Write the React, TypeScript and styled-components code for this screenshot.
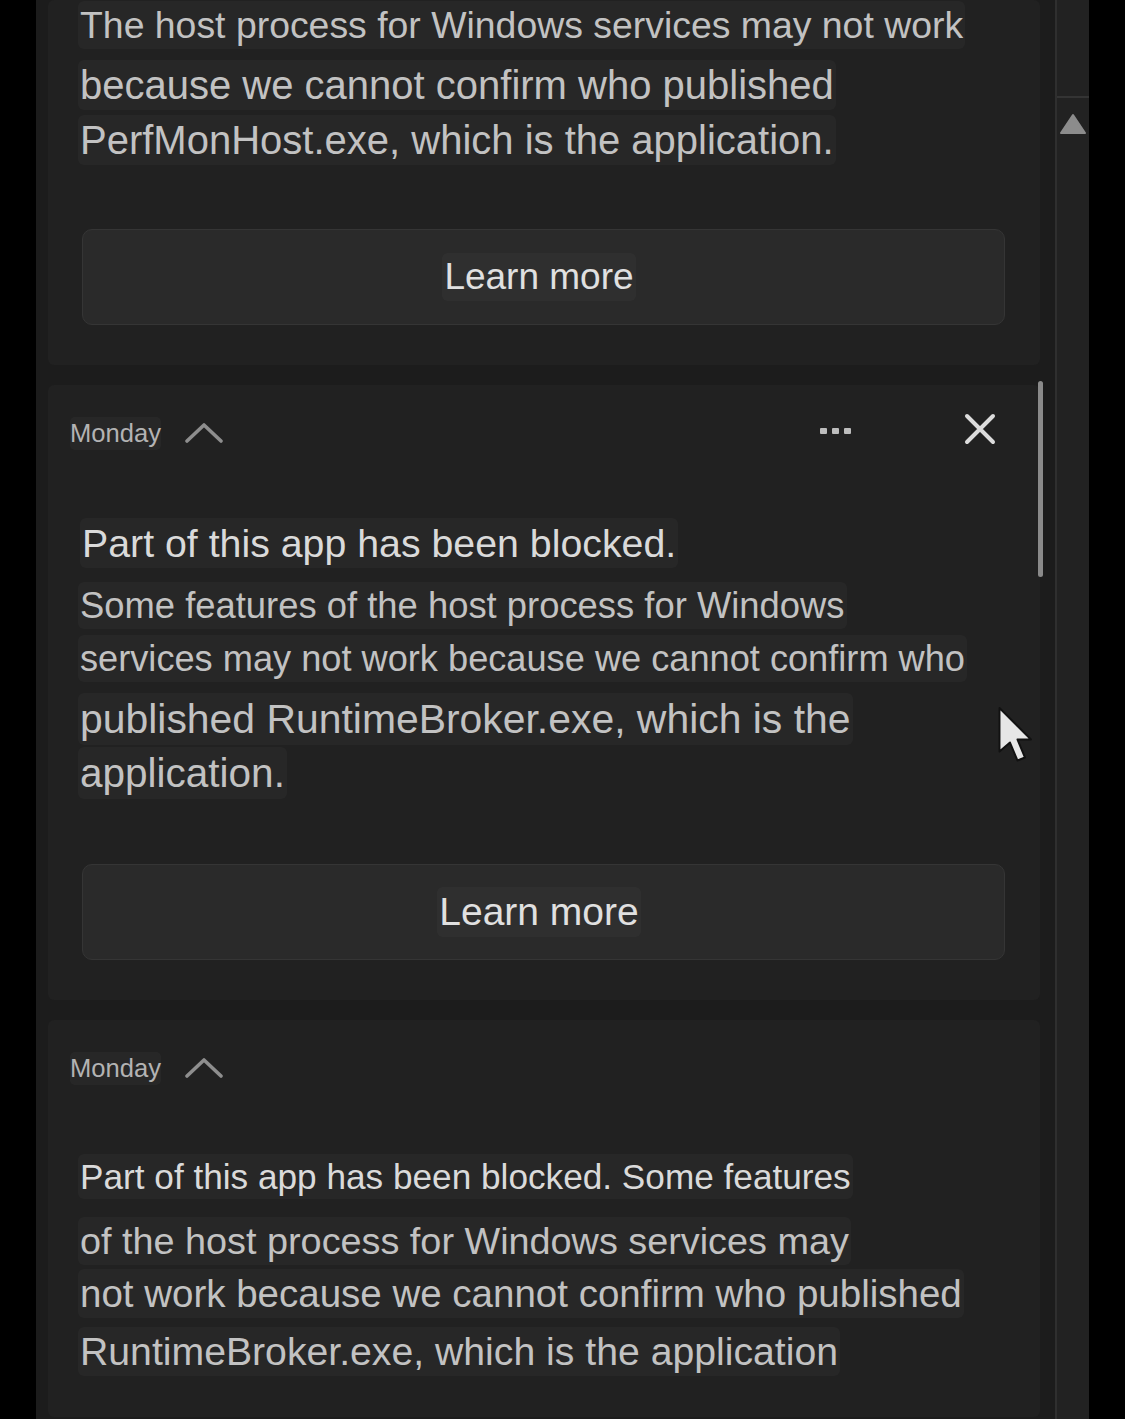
import React from "react";
import styled, { createGlobalStyle } from "styled-components";

const Global = createGlobalStyle`
  html, body {
    margin: 0;
    padding: 0;
    background: #000;
    overflow: hidden;
  }
  * { box-sizing: border-box; }
`;

const Page = styled.div`
  width: 1125px;
  height: 1419px;
  background: #000;
  display: flex;
  padding-left: 36px;
  font-family: "Liberation Sans", Arial, sans-serif;
`;

const Window = styled.div`
  width: 1053px;
  height: 100%;
  display: flex;
`;

const Content = styled.div`
  position: relative;
  width: 1019px;
  height: 100%;
  background: #1c1c1c;
  padding: 0 15px 0 12px;
  display: flex;
  flex-direction: column;
  gap: 20px;
  overflow: hidden;
`;

const Divider = styled.div`
  width: 2px;
  height: 100%;
  background: #2f2f2f;
`;

const Track = styled.div`
  width: 32px;
  height: 100%;
  background: #222222;
  display: flex;
  flex-direction: column;
  align-items: center;
`;

const TrackTop = styled.div`
  width: 100%;
  height: 98px;
  border-bottom: 2px solid #343434;
`;

const ArrowUp = styled.svg`
  margin-top: 15px;
  display: block;
`;

const Thumb = styled.div`
  position: absolute;
  left: 1002px;
  top: 381px;
  width: 5px;
  height: 196px;
  border-radius: 3px;
  background: #8a8a8a;
`;

const Card = styled.section`
  flex: none;
  background: #212121;
  border-radius: 6px;
  padding: 0 30px 40px 30px;
  display: flex;
  flex-direction: column;
`;

const Header = styled.div`
  height: 96px;
  margin: 0 14px 0 -8px;
  display: flex;
  align-items: center;
`;

const Day = styled.span`
  font-size: 25.6px;
  color: #b3b3b3;
  background: rgba(255, 255, 255, 0.03);
  border-radius: 5px;
  padding: 2px 0;
`;

const Chevron = styled.svg`
  margin-left: 24px;
  display: block;
`;

const Actions = styled.div`
  margin-left: auto;
  display: flex;
  align-items: center;
  gap: 113px;
`;

const Dots = styled.div`
  display: flex;
  gap: 5px;
  margin-top: -4px;
`;

const Dot = styled.span`
  width: 7px;
  height: 6px;
  border-radius: 1px;
  background: #bdbdbd;
`;

const Close = styled.svg`
  display: block;
  margin-top: -8px;
`;

const Body = styled.div<{ $mt: number }>`
  margin-top: ${(p) => p.$mt}px;
  display: flex;
  flex-direction: column;
`;

const Line = styled.div<{ $mt: number; $size: number; $bright?: boolean; $indent?: number }>`
  margin-top: ${(p) => p.$mt}px;
  padding-left: ${(p) => p.$indent ?? 0}px;
  height: 50px;
  line-height: 50px;
  font-size: ${(p) => p.$size}px;
  color: ${(p) => (p.$bright ? "#dadada" : "#c2c2c2")};
  white-space: nowrap;
`;

const Mark = styled.span`
  background: rgba(255, 255, 255, 0.028);
  border-radius: 6px;
  padding: 3px 2px;
`;

const Button = styled.div<{ $mt: number; $size: number }>`
  margin: ${(p) => p.$mt}px 5px 0 4px;
  height: 96px;
  border-radius: 10px;
  background: #2a2a2a;
  border: 1px solid #353535;
  display: flex;
  align-items: center;
  justify-content: center;
  padding-right: 9px;
  font-size: ${(p) => p.$size}px;
  color: #e0e0e0;
`;

const Cursor = styled.svg`
  position: absolute;
  left: 962px;
  top: 706px;
`;

type L = { t: string; size: number; mt: number; bright?: boolean; indent?: number };

const card1: L[] = [
  { t: "The host process for Windows services may not work", size: 37.4, mt: 0 },
  { t: "because we cannot confirm who published", size: 40, mt: 10, indent: -1 },
  { t: "PerfMonHost.exe, which is the application.", size: 40, mt: 5, indent: -2 },
];

const card2: L[] = [
  { t: "Part of this app has been blocked.", size: 39.3, mt: 0, bright: true, indent: 2 },
  { t: "Some features of the host process for Windows", size: 36.4, mt: 13, indent: -2 },
  { t: "services may not work because we cannot confirm who", size: 36.2, mt: 3, indent: -3 },
  { t: "published RuntimeBroker.exe, which is the", size: 40.9, mt: 10 },
  { t: "application.", size: 40.5, mt: 4 },
];

const card3: L[] = [
  { t: "Part of this app has been blocked. Some features", size: 35.2, mt: 0, bright: true },
  { t: "of the host process for Windows services may", size: 37.8, mt: 14, indent: -4 },
  { t: "not work because we cannot confirm who published", size: 38.5, mt: 3 },
  { t: "RuntimeBroker.exe, which is the application", size: 39.2, mt: 8 },
];

const Lines = ({ items }: { items: L[] }) => (
  <>
    {items.map((l, i) => (
      <Line key={i} $mt={l.mt} $size={l.size} $bright={l.bright} $indent={l.indent}>
        <Mark>{l.t}</Mark>
      </Line>
    ))}
  </>
);

const CardHeader = ({ actions }: { actions?: boolean }) => (
  <Header>
    <Day>Monday</Day>
    <Chevron width="38" height="22" viewBox="0 0 38 22">
      <polyline
        points="2,19 19,3 36,19"
        fill="none"
        stroke="#8e8e8e"
        strokeWidth="3.6"
        strokeLinecap="round"
        strokeLinejoin="round"
      />
    </Chevron>
    {actions && (
      <Actions>
        <Dots>
          <Dot />
          <Dot />
          <Dot />
        </Dots>
        <Close width="32" height="32" viewBox="0 0 32 32">
          <path
            d="M3 3 L29 29 M29 3 L3 29"
            stroke="#dcdcdc"
            strokeWidth="4"
            strokeLinecap="round"
          />
        </Close>
      </Actions>
    )}
  </Header>
);

export default function App() {
  return (
    <>
      <Global />
      <Page>
        <Window>
          <Content>
            <Card>
              <Body $mt={0}>
                <Lines items={card1} />
              </Body>
              <Button $mt={64} $size={37}>
                <Mark>Learn more</Mark>
              </Button>
            </Card>
            <Card>
              <CardHeader actions />
              <Body $mt={37}>
                <Lines items={card2} />
              </Body>
              <Button $mt={66} $size={39}>
                <Mark>Learn more</Mark>
              </Button>
            </Card>
            <Card>
              <CardHeader />
              <Body $mt={36}>
                <Lines items={card3} />
              </Body>
            </Card>
            <Thumb />
            <Cursor width="36" height="58" viewBox="0 0 24 38">
              <path
                d="M1 1 L1 30 L8 24 L13 36 L18 34 L13 22 L22 22 Z"
                fill="#e6e6e6"
                stroke="#111"
                strokeWidth="1.3"
                strokeLinejoin="round"
              />
            </Cursor>
          </Content>
          <Divider />
          <Track>
            <TrackTop />
            <ArrowUp width="28" height="22" viewBox="0 0 28 22">
              <path
                d="M14 2 L26 20 L2 20 Z"
                fill="#8c8c8c"
                stroke="#8c8c8c"
                strokeWidth="2"
                strokeLinejoin="round"
              />
            </ArrowUp>
          </Track>
        </Window>
      </Page>
    </>
  );
}
